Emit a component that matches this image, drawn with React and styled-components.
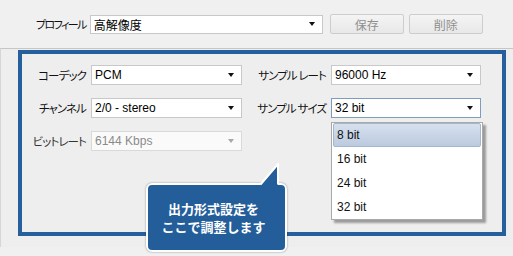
import styled, { createGlobalStyle } from 'styled-components'

const GlobalStyle = createGlobalStyle`
  html, body { margin: 0; padding: 0; }
  body {
    background: #efefef;
    font-family: "Noto Sans CJK JP", sans-serif;
    font-size: 12px;
    color: #111;
  }
`

const JP = `"Noto Sans CJK JP", sans-serif`
const LATIN = `"Liberation Sans", "Noto Sans CJK JP", sans-serif`

export default function App() {
  return (
    <Page>
      <GlobalStyle />

      <TopBar>
        <Label $compact>プロフィール</Label>
        <Select $width={233} $height={19}>
          <span>高解像度</span>
          <Arrow />
        </Select>
        <Button>保存</Button>
        <Button>削除</Button>
      </TopBar>

      <Panel>
        <Frame>
          <Grid>
            <Label>コーデック</Label>
            <Select><span>PCM</span><Arrow /></Select>
            <Label>サンプル レート</Label>
            <Select><span>96000 Hz</span><Arrow /></Select>

            <Label>チャンネル</Label>
            <Select><span>2/0 - stereo</span><Arrow /></Select>
            <Label>サンプル サイズ</Label>
            <Select $focused>
              <span>32 bit</span>
              <Arrow />
              <DropList>
                <Option $active>8 bit</Option>
                <Option>16 bit</Option>
                <Option>24 bit</Option>
                <Option>32 bit</Option>
              </DropList>
            </Select>

            <Label $disabled>ビットレート</Label>
            <Select $disabled><span>6144 Kbps</span><Arrow $disabled /></Select>
          </Grid>
        </Frame>
      </Panel>

      <Callout>
        <Tail width="24" height="25" viewBox="0 0 24 25">
          <polygon points="2,23.5 20,2 20,23.5" fill="#245e9a" />
          <polyline points="2.5,22.5 20,2 20,22.5" fill="none" stroke="#fff" strokeWidth="2" strokeLinejoin="round" />
        </Tail>
        <p>出力形式設定を<br />ここで調整します</p>
      </Callout>
    </Page>
  )
}

const Page = styled.div`
  position: relative;
  width: 513px;
  height: 256px;
  overflow: hidden;
  background: #f0f0f0;
`

const TopBar = styled.div`
  height: 48px;
  display: flex;
  align-items: center;
  padding-left: 36px;
  box-sizing: border-box;

  & > div:nth-child(2) {
    margin-left: 4px;
    margin-right: 7px;
  }
  & > button + button {
    margin-left: 5px;
  }
`

const Label = styled.div`
  font-family: ${JP};
  font-feature-settings: "palt" 1;
  font-size: ${p => p.$compact ? 11 : 11.5}px;
  letter-spacing: ${p => p.$compact ? -1.6 : -0.9}px;
  color: ${p => p.$disabled ? '#333' : '#111'};
  white-space: nowrap;
  text-align: right;
`

const Select = styled.div`
  position: relative;
  box-sizing: border-box;
  width: ${p => p.$width ? `${p.$width}px` : 'auto'};
  height: ${p => p.$height || 20}px;
  display: flex;
  align-items: center;
  justify-content: space-between;
  padding: 0 7px 0 3px;
  background: ${p => p.$disabled ? '#fafafa' : '#fff'};
  border: 1px solid ${p => p.$focused ? '#7f9bbd' : p.$disabled ? '#d9d9d9' : '#c8c8c8'};
  font-family: ${LATIN};
  font-size: 12px;
  color: ${p => p.$disabled ? '#8a8a8a' : '#000'};
`

const Arrow = styled.i`
  width: 0;
  height: 0;
  border-left: 3.5px solid transparent;
  border-right: 3.5px solid transparent;
  border-top: 4px solid ${p => p.$disabled ? '#a8a8a8' : '#111'};
`

const Button = styled.button`
  width: 74px;
  height: 20px;
  padding: 0;
  box-sizing: border-box;
  border: 1px solid #cdcdcd;
  border-radius: 2px;
  background: linear-gradient(#f4f4f4, #e8e8e8);
  font-family: ${JP};
  font-size: 12px;
  color: #8f8f8f;
`

const Panel = styled.div`
  height: 199px;
  box-sizing: border-box;
  border-top: 1px solid #c6c6c6;
  border-left: 1px solid #d6d6d6;
  padding: 1px 0 0 17px;
  background: #eeeeee;
`

const Frame = styled.div`
  width: 488px;
  height: 186px;
  box-sizing: border-box;
  border: 4px solid #25609d;
  padding-top: 11px;
`

const Grid = styled.div`
  display: grid;
  grid-template-columns: 64px 151px 79px 150px;
  grid-auto-rows: 20px;
  column-gap: 5px;
  row-gap: 13px;
  align-items: center;
`

const DropList = styled.div`
  position: absolute;
  left: -1px;
  top: 23px;
  width: 152px;
  box-sizing: border-box;
  padding: 0 1px;
  background: #fff;
  border: 1px solid #a9a9a9;
  box-shadow: 3px 3px 2px rgba(0, 0, 0, 0.35);
  z-index: 2;
`

const Option = styled.div`
  height: 24px;
  box-sizing: border-box;
  display: flex;
  align-items: center;
  padding-left: 3px;
  font-family: ${LATIN};
  font-size: 12px;
  color: #111;
  border: 1px solid ${p => p.$active ? '#a4b5cc' : 'transparent'};
  border-radius: 2px;
  background: ${p => p.$active ? 'linear-gradient(#d6e1ef, #bccadf)' : 'transparent'};
`

const Callout = styled.div`
  position: absolute;
  left: 146px;
  top: 183px;
  width: 141px;
  height: 69px;
  box-sizing: border-box;
  border: 2px solid #fff;
  border-radius: 6px;
  background: #245e9a;
  box-shadow: 0 0 2px rgba(0, 0, 0, 0.45);
  display: flex;
  align-items: center;
  justify-content: center;
  z-index: 3;

  p {
    margin: 0 6px 0 0;
    font-family: ${JP};
    font-size: 13px;
    font-weight: bold;
    line-height: 18px;
    color: #fff;
    text-align: center;
  }
`

const Tail = styled.svg`
  position: absolute;
  left: 110px;
  top: -23px;
`
